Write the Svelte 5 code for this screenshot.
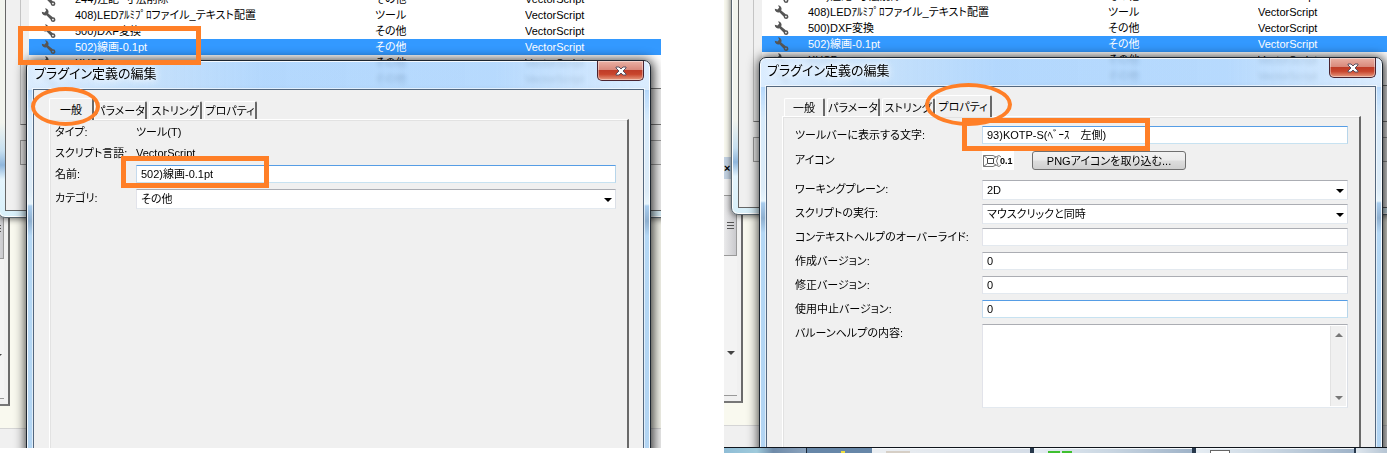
<script>
  const rows = [
    { name: '244)注記・寸法削除', kind: 'その他' },
    { name: '408)LEDｱﾙﾐﾌﾟﾛファイル_テキスト配置', kind: 'ツール' },
    { name: '500)DXF変換', kind: 'その他' },
    { name: '502)線画-0.1pt', kind: 'その他', selected: true },
    { name: 'KUSP', kind: 'その他' },
    { name: '', kind: 'その他' }
  ];
  const tabs = ['一般', 'パラメータ', 'ストリング', 'プロパティ'];
</script>

{#snippet desktop()}
  <div class="dock">
    <div class="dock-title">×</div>
    <div class="track"><i class="thumb"></i><i class="down"></i></div>
  </div>
  <div class="status"></div>
  <div class="parent">
    <div class="client">
      <div class="group"></div>
      <div class="field"></div>
      <div class="list">
        <table>
          <colgroup><col class="c-icon" /><col class="c-name" /><col class="c-kind" /><col /></colgroup>
          <tbody>
            {#each rows as row}
              <tr class:selected={row.selected}>
                <td>
                  <svg class="wrench" viewBox="0 0 16 16" width="16" height="16" aria-hidden="true">
                    <path d="M5 1.2L6.2 3.6L4.6 5.4L1.8 4.8A3.4 3.4 0 0 0 6.4 8.2L10.6 12.6A2.4 2.4 0 1 0 12.8 10.2L8.2 6.4A3.6 3.6 0 0 0 5 1.2ZM13 11.8A.8 .8 0 1 1 12.9 11.8Z" fill="#555" fill-rule="evenodd" />
                  </svg>
                </td>
                <td>{row.name}</td>
                <td>{row.kind}</td>
                <td>VectorScript</td>
              </tr>
            {/each}
          </tbody>
        </table>
      </div>
    </div>
  </div>
{/snippet}

{#snippet arrow()}
  <svg class="arrow" viewBox="0 0 8 4" width="8" height="4" aria-hidden="true"><path d="M0 0H8L4 4Z" fill="#000" /></svg>
{/snippet}

{#snippet dialog(active, body)}
  <section class="dialog" aria-label="プラグイン定義の編集">
    <header>
      <h2>プラグイン定義の編集</h2>
      <button class="close" aria-label="閉じる">
        <svg viewBox="0 0 12 10" width="12" height="10" aria-hidden="true">
          <path d="M1 1H4L6 3L8 1H11V2L8 5L11 8V9H8L6 7L4 9H1V8L4 5L1 2Z" fill="#fff" stroke="#5a5060" stroke-width="1" />
        </svg>
      </button>
    </header>
    <div class="content">
      <div class="tabs" role="tablist">
        {#each tabs as tab, i}
          <button role="tab" class="tab" class:short={i === 0} class:active={i === active} aria-selected={i === active}>{tab}</button>
        {/each}
      </div>
      <div class="panel">{@render body()}</div>
    </div>
  </section>
{/snippet}

{#snippet general()}
  <div class="form general">
    <span class="label text-row">タイプ:</span><span class="text-row">ツール(T)</span>
    <span class="label text-row">スクリプト言語:</span><span class="text-row">VectorScript</span>
    <label for="name">名前:</label><input id="name" class="focus" value="502)線画-0.1pt" />
    <label for="category">カテゴリ:</label>
    <span class="combo"><select id="category"><option>その他</option></select>{@render arrow()}</span>
  </div>
{/snippet}

{#snippet properties()}
  <div class="form properties">
    <label for="caption">ツールバーに表示する文字:</label><input id="caption" class="focus" value="93)KOTP-S(ﾍﾞｰｽ　左側)" />
    <span class="label">アイコン</span>
    <span class="icon-row">
      <span class="preview">
        <svg viewBox="0 0 20 16" width="20" height="16" aria-hidden="true">
          <g fill="none" stroke="#777" stroke-width="1">
            <path d="M1.5 2.5H11L14 4L17 2.5L19 4M1.5 2.5V13.5H11L14 12L17 13.5L19 12" />
            <path d="M5.5 5.5H11.5V10.5H5.5Z" stroke="#444" />
            <path d="M1.5 2.5L5.5 5.5M1.5 13.5L5.5 10.5M11.5 5.5L14 4M11.5 10.5L14 12M16 4Q13 8 16 12" />
          </g>
        </svg><b>0.1</b>
      </span>
      <button class="import">PNGアイコンを取り込む...</button>
    </span>
    <label for="plane">ワーキングプレーン:</label>
    <span class="combo"><select id="plane"><option>2D</option></select>{@render arrow()}</span>
    <label for="run">スクリプトの実行:</label>
    <span class="combo"><select id="run"><option>マウスクリックと同時</option></select>{@render arrow()}</span>
    <label for="help">コンテキストヘルプのオーバーライド:</label><input id="help" value="" />
    <label for="created">作成バージョン:</label><input id="created" value="0" />
    <label for="modified">修正バージョン:</label><input id="modified" value="0" />
    <label for="retired">使用中止バージョン:</label><input id="retired" class="focus" value="0" />
    <label for="balloon">バルーンヘルプの内容:</label>
    <span class="memo">
      <textarea id="balloon"></textarea>
      <span class="scroll" aria-hidden="true">
        <svg viewBox="0 0 8 4" width="8" height="4"><path d="M0 4H8L4 0Z" fill="#777" /></svg>
        <svg viewBox="0 0 8 4" width="8" height="4"><path d="M0 0H8L4 4Z" fill="#777" /></svg>
      </span>
    </span>
  </div>
{/snippet}

<main>
  <div class="scene first">
    <div class="desktop">{@render desktop()}{@render dialog(0, general)}</div>
    <i class="mark row-mark"></i>
    <i class="mark oval tab-mark"></i>
    <i class="mark name-mark"></i>
  </div>
  <div class="scene second">
    <div class="desktop">{@render desktop()}{@render dialog(3, properties)}</div>
    <i class="mark caption-mark"></i>
    <i class="mark oval prop-mark"></i>
    <div class="taskbar">
      <span class="start"></span>
      <span class="pinned"><i></i></span>
      <span class="task folder"><i></i></span>
      <span class="task green"><i></i></span>
      <span class="task doc"><i></i></span>
      <span class="tail"></span>
    </div>
  </div>
</main>

<style>
  :global(body) { margin: 0; background: #fff; }
  main {
    display: grid;
    grid-template-columns: 661fr 663fr;
    column-gap: 63px;
    padding-right: 5px;
    align-items: start;
    color: #000;
    font: 11px/16px "Liberation Sans", "Noto Sans CJK JP", sans-serif;
    font-feature-settings: "palt";
  }
  input, select, textarea, button {
    font: inherit;
    font-feature-settings: inherit;
    color: inherit;
    box-sizing: border-box;
    margin: 0;
    border-radius: 0;
    outline: none;
  }

  .scene { position: relative; overflow: hidden; min-height: 448px; background: #f9f9ef; --x: 0px; --y: 0px; --edge: 10px; }
  .second { min-height: 453px; --x: 9px; --y: -3px; --edge: 4px; }
  .desktop { position: absolute; left: var(--x); right: 0; top: var(--y); bottom: 0; }

  /* windows behind the dialog */
  .dock { position: absolute; left: -14px; top: 160px; width: 22px; height: 244px; background: #f0f0f0; border-right: 2px solid #6a6a6a; border-bottom: 2px solid #777; }
  .dock-title { height: 22px; padding-left: 5px; background: #c3d2e2; line-height: 22px; font-weight: bold; }
  .track { position: relative; height: 216px; width: 18px; border-bottom: 1px solid #999; background: #f3f3f3; }
  .thumb { position: absolute; left: 0; right: 0; top: 16px; height: 61px; border: 1px solid #999; box-sizing: border-box; background: repeating-linear-gradient(#555 0 1px, transparent 1px 3px) 7px 26px / 7px 9px no-repeat, linear-gradient(90deg, #f5f5f5, #c9c9cd); }
  .down { position: absolute; left: 8px; bottom: 40px; border: 4px solid transparent; border-top-color: #444; border-bottom: 0; }
  .status { position: absolute; left: -9px; right: 0; top: 428px; bottom: 0; background: #f0f0f0; border-top: 1px solid #d5d5d5; }
  .parent {
    position: absolute; left: -2px; right: -20px; top: -20px; height: 238px; box-sizing: border-box;
    border: 1px solid #59656e; border-radius: 0 0 7px 7px; padding: 0 0 6px 6px;
    background: linear-gradient(#f2f4ee 0 60%, #c6dff0 72%, #8fb6dc 78%, #e4f4fc 84%, #d8f0fa);
    box-shadow: 0 1px 6px rgba(0, 0, 0, .6), inset 0 0 0 1px #fff;
  }
  .client { position: relative; height: 100%; box-sizing: border-box; background: #f0f0f0; border: 1px solid #666; border-top: 0; }
  .group { position: absolute; left: 14px; right: 0; top: 0; height: 143px; border-left: 1px solid #c4c4c4; border-bottom: 1px solid #777; }
  .field { position: absolute; left: 14px; right: 0; top: 159px; height: 23px; border: 1px solid #999; background: #e9e9e9; }
  .list { position: absolute; left: 23px; right: 0; top: 0; height: 108px; box-sizing: border-box; padding-top: 10px; overflow: hidden; background: #fff; border-bottom: 1px solid #777; }
  table { width: 100%; table-layout: fixed; border-collapse: collapse; }
  .c-icon { width: 46px; }
  .c-name { width: 300px; }
  .c-kind { width: 150px; }
  td { height: 16px; padding: 0; line-height: 16px; white-space: nowrap; overflow: hidden; }
  .selected { background: #3399ff; color: #fff; }
  .wrench { display: block; margin-left: 11px; }

  /* dialog */
  .dialog {
    position: absolute; left: 26px; right: var(--edge); top: 60px; bottom: -20px;
    box-sizing: border-box; display: flex; flex-direction: column;
    border: 1px solid #1d2630; border-radius: 7px 7px 0 0; padding: 0 6px;
    background: linear-gradient(90deg, rgba(255, 255, 255, .5), rgba(214, 232, 248, .5) 18%, rgba(150, 200, 252, .1) 38%, transparent 75%, rgba(255, 255, 255, .5)) 0 0 / 100% 29px no-repeat,
      linear-gradient(rgba(170, 211, 253, .85) 0 28px, #d8ebfb 60px, #dcebf7 130px, #e6f4fc 143px, #a9cdee 145px, #8fb0d0 160px, #b5d8f5 175px, #b2d4f2);
    backdrop-filter: blur(2px);
    box-shadow: 1px 1px 12px 1px rgba(0, 0, 0, .85), inset 0 0 0 1px rgba(255, 255, 255, .85);
  }
  header { height: 28px; display: flex; justify-content: space-between; align-items: flex-start; }
  h2 { margin: 0; font-size: 13px; line-height: 25px; font-weight: 400; padding-left: 1px; text-shadow: 0 0 6px #fff, 0 0 8px #fff; }
  .close {
    width: 47px; height: 20px; padding: 0; display: grid; place-items: center;
    border: 1px solid #4a2430; border-top: 0; border-radius: 0 0 5px 5px;
    background: linear-gradient(#eab1a5, #d98a7c 45%, #bf3c28 50%, #c8452c 70%, #e79a80);
    box-shadow: inset 0 0 0 1px rgba(255, 255, 255, .4);
  }
  .content { flex: 1; display: flex; flex-direction: column; background: #f0f0f0; border: 1px solid #53677e; border-bottom: 0; padding: 7px 14px 0 15px; box-shadow: 0 0 0 1px rgba(255, 255, 255, .6); }
  .tabs { display: flex; align-items: flex-end; gap: 2px; height: 22px; padding-left: 2px; }
  .tab { width: 53px; height: 18px; padding: 0; border: 1px solid; border-color: #fff #696969 transparent #fff; border-right-width: 2px; border-bottom: 0; border-radius: 2px 2px 0 0; background: #f0f0f0; white-space: nowrap; line-height: 16px; }
  .short { width: 41px; }
  .active { position: relative; z-index: 1; height: 22px; width: 57px; margin: 0 -2px -1px; line-height: 18px; }
  .short.active { width: 45px; }
  .panel { flex: 1; border: 1px solid; border-color: #fff #696969 #fff #fff; border-right-width: 2px; border-bottom: 0; box-shadow: inset 1px 1px #e2e2e2; }

  .form { display: grid; align-content: start; align-items: start; line-height: 18px; white-space: nowrap; }
  .general { grid-template-columns: 81px 1fr; grid-template-rows: 21px 21px 24px 24px; padding: 3px 11px 0 5px; }
  .properties { grid-template-columns: 187px 1fr; grid-template-rows: 25px 29px; grid-auto-rows: minmax(24px, auto); padding: 9px 11px 0 12px; }
  input, select, textarea { width: 100%; height: 18px; padding: 0 4px; border: 1px solid; border-color: #abadb3 #dbdfe6 #e3e9ef #e2e3ea; background: #fff; }
  .focus { border-color: #569de5 #b7d5ea #c7e2f1 #c5daed; }
  select { height: 20px; appearance: none; }
  .combo { position: relative; display: block; height: 20px; }
  .combo select { display: block; }
  .arrow { position: absolute; right: 4px; top: 9px; }
  .icon-row { display: flex; gap: 18px; }
  .preview { width: 32px; height: 19px; display: flex; align-items: center; background: #fff; }
  .preview b { font-size: 9px; line-height: 18px; margin-left: -2px; }
  .preview svg { flex: none; }
  .import { height: 19px; width: 154px; padding: 0; border: 1px solid #707070; border-radius: 3px; background: linear-gradient(#f2f2f2, #ebebeb 48%, #ddd 52%, #cfcfcf); line-height: 16px; }
  .memo { position: relative; display: block; height: 84px; }
  .memo textarea { display: block; height: 84px; resize: none; }
  .scroll { position: absolute; right: 2px; top: 2px; bottom: 2px; width: 16px; box-sizing: border-box; padding: 7px 0 6px; display: flex; flex-direction: column; justify-content: space-between; align-items: center; background: #f0f0f0; border-left: 1px solid #e2e2e2; }

  /* highlights drawn over the windows */
  .mark { position: absolute; box-sizing: border-box; border: 5px solid #ff7f27; }
  .oval { border-radius: 50%; border-width: 4px; }
  .row-mark { left: 18px; top: 26px; width: 183px; height: 39px; }
  .tab-mark { left: 31px; top: 87px; width: 69px; height: 39px; }
  .name-mark { left: 121px; top: 156px; width: 148px; height: 32px; }
  .caption-mark { left: 238px; top: 118px; width: 188px; height: 33px; }
  .prop-mark { left: 201px; top: 83px; width: 87px; height: 43px; }

  .taskbar { position: absolute; left: 0; right: 0; bottom: 0; height: 6px; box-sizing: border-box; display: grid; grid-template-columns: 82fr 66fr 160fr 162fr 162fr 31fr; border-top: 1px solid #10151c; background: #33475e; }
  .taskbar span { position: relative; overflow: hidden; }
  .taskbar i { position: absolute; left: 14px; bottom: 0; height: 2px; width: 24px; }
  .start { background: linear-gradient(90deg, #8fbdd6, #9fcadb 40%, #6f8ba9 60%, #8ba3bd); }
  .pinned { background: #6787a8; border-left: 1px solid #1b2735; }
  .taskbar .pinned i { left: 34px; width: 4px; background: #f0e040; }
  .task { border: solid #27384b; border-width: 0 2px; background: linear-gradient(90deg, #e6edf3, #c8d5e1 50%, #9fb3c8); box-shadow: inset 0 1px #f5f9fc; }
  .task.folder { background: linear-gradient(90deg, #eceff2, #d5dde7); border-left-width: 0; }
  .folder i { background: #d6cfc6; }
  .green i { background: linear-gradient(90deg, #3fc02f 48%, #d8e4ea 48% 58%, #3fc02f 58%); }
  .taskbar .doc i { width: 20px; height: 3px; box-sizing: border-box; background: #fff; border: 1px solid #666; border-bottom: 0; }
  .tail { background: linear-gradient(90deg, #dfe7ee, #b5c4d3); }
</style>
